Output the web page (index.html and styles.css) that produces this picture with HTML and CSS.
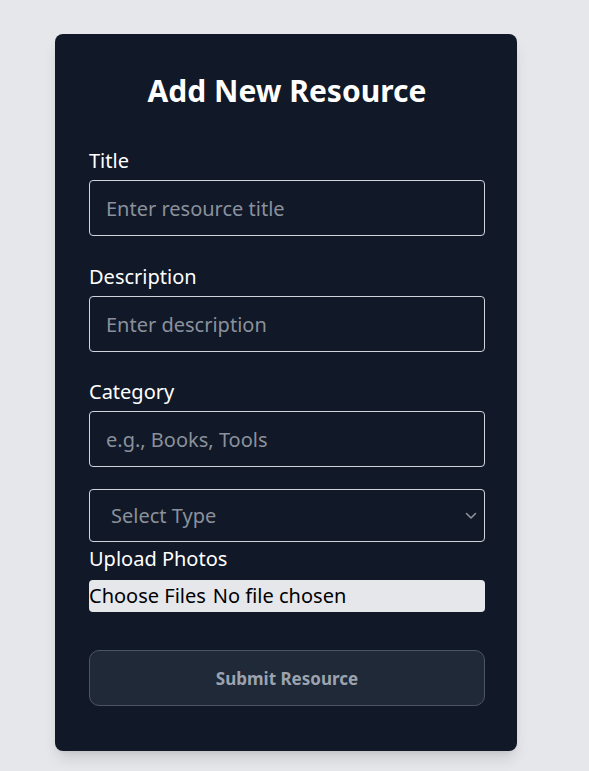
FILE: index.html
```html
<!DOCTYPE html>
<html lang="en">
<head>
<meta charset="utf-8">
<title>Add New Resource</title>
<link rel="stylesheet" href="styles.css">
</head>
<body>
<div class="page">
  <form class="card">
    <h1 class="card-title">Add New Resource</h1>
    <div class="field">
      <label class="label" for="title">Title</label>
      <input class="input" id="title" type="text" placeholder="Enter resource title">
    </div>
    <div class="field field-mid">
      <label class="label" for="desc">Description</label>
      <input class="input" id="desc" type="text" placeholder="Enter description">
    </div>
    <div class="field field-last">
      <label class="label" for="cat">Category</label>
      <input class="input" id="cat" type="text" placeholder="e.g., Books, Tools">
    </div>
    <div class="select-wrap">
      <select class="select">
        <option>Select Type</option>
      </select>
      <svg class="chevron" width="12" height="8" viewBox="0 0 12 8" aria-hidden="true"><path d="M1.5 1.5 6 6l4.5-4.5" fill="none" stroke="#8b929c" stroke-width="1.6" stroke-linecap="round" stroke-linejoin="round"/></svg>
    </div>
    <label class="label upload-label">Upload Photos</label>
    <label class="file">
      <input type="file" multiple hidden>
      <span class="file-btn">Choose Files</span>
      <span class="file-name">No file chosen</span>
    </label>
    <button class="submit" type="button">Submit Resource</button>
  </form>
</div>
</body>
</html>
```
FILE: styles.css
```css
* { box-sizing: border-box; }
html, body { margin: 0; padding: 0; }
body {
  background: #e5e7eb;
  font-family: "Noto Sans", "Open Sans", sans-serif;
  height: 771px;
  overflow: hidden;
}
.page {
  padding: 34px 0 0 55px;
}
.card {
  width: 462px;
  background: #111827;
  border-radius: 8px;
  padding: 39px 32px 45px 34px;
  box-shadow: 0 10px 15px -3px rgba(0,0,0,0.12), 0 4px 6px -4px rgba(0,0,0,0.1);
  display: flex;
  flex-direction: column;
}
.card-title {
  margin: 0 0 38px;
  text-align: center;
  color: #ffffff;
  font-size: 30px;
  line-height: 36px;
  font-weight: 700;
}
.field {
  display: flex;
  flex-direction: column;
  margin-bottom: 27px;
}
.field-mid { margin-bottom: 26px; }
.field-last { margin-bottom: 22px; }
.label {
  color: #ffffff;
  font-size: 20px;
  line-height: 28px;
  margin-bottom: 5px;
}
.input {
  height: 56px;
  width: 100%;
  background: transparent;
  border: 1px solid #d1d5db;
  border-radius: 4px;
  padding: 0 16px;
  color: #ffffff;
  font-family: inherit;
  font-size: 20px;
  outline: none;
}
.input::placeholder { color: #8a919c; }
.select-wrap {
  position: relative;
  height: 53px;
}
.select {
  appearance: none;
  -webkit-appearance: none;
  width: 100%;
  height: 53px;
  background: transparent;
  border: 1px solid #d1d5db;
  border-radius: 4px;
  padding: 0 40px 0 21px;
  color: #8a919c;
  font-family: inherit;
  font-size: 20px;
  outline: none;
}
.chevron {
  position: absolute;
  right: 8px;
  top: 23px;
}
.upload-label {
  margin-top: 3px;
  margin-bottom: 7px;
}
.file {
  display: flex;
  align-items: center;
  gap: 7px;
  height: 32px;
  background: #e5e7eb;
  border-radius: 4px;
  color: #000000;
  font-size: 20px;
  line-height: 28px;
  white-space: nowrap;
}
.submit {
  margin-top: 38px;
  height: 56px;
  width: 100%;
  background: #1f2937;
  border: 1px solid #4b5563;
  border-radius: 10px;
  color: #9ca3af;
  font-family: inherit;
  font-size: 17px;
  font-weight: 700;
}
```
